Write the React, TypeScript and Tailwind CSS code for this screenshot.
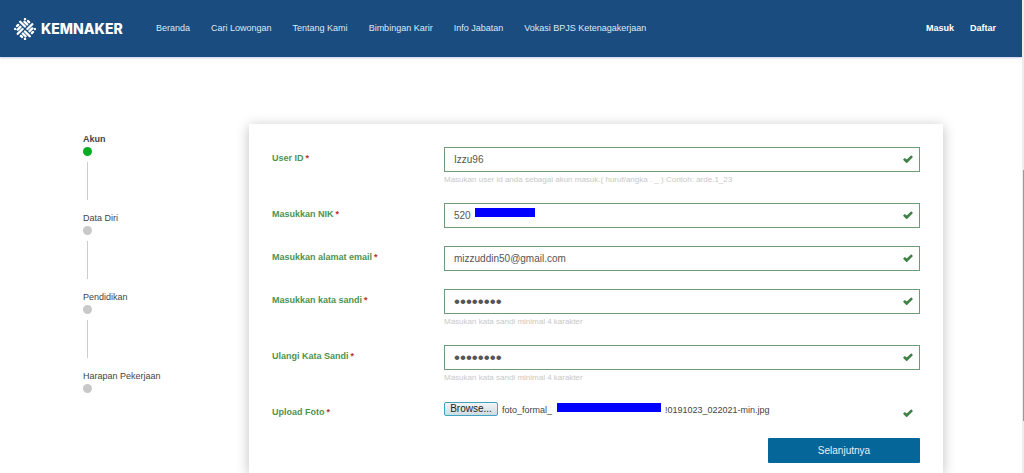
import { useRef, useState } from "react";
import clsx from "clsx";

const navLinks = [
  "Beranda",
  "Cari Lowongan",
  "Tentang Kami",
  "Bimbingan Karir",
  "Info Jabatan",
  "Vokasi BPJS Ketenagakerjaan",
];

const steps = ["Akun", "Data Diri", "Pendidikan", "Harapan Pekerjaan"];

type Field = {
  id: string;
  label: string;
  type: string;
  value: string;
  hint?: string;
  masked?: boolean;
};

const fields: Field[] = [
  {
    id: "userId",
    label: "User ID",
    type: "text",
    value: "Izzu96",
    hint: "Masukan user id anda sebagai akun masuk.( huruf/angka . _ ) Contoh: arde.1_23",
  },
  { id: "nik", label: "Masukkan NIK", type: "text", value: "520", masked: true },
  {
    id: "email",
    label: "Masukkan alamat email",
    type: "email",
    value: "mizzuddin50@gmail.com",
  },
  {
    id: "password",
    label: "Masukkan kata sandi",
    type: "password",
    value: "rahasia1",
    hint: "Masukan kata sandi minimal 4 karakter",
  },
  {
    id: "confirm",
    label: "Ulangi Kata Sandi",
    type: "password",
    value: "rahasia1",
    hint: "Masukan kata sandi minimal 4 karakter",
  },
];

const Logo = () => (
  <svg viewBox="0 0 44 44" className="h-[22px] w-[22px]" aria-hidden="true">
    <g
      transform="rotate(45 22 22)"
      stroke="white"
      strokeWidth="4.8"
      strokeLinecap="round"
    >
      {/* one woven arm, repeated in each quarter */}
      <path d="M5 18.5H18.5M11 12.5H18.5M15 6.5H18M8 8H8.1" />
      <path d="M5 18.5H18.5M11 12.5H18.5M15 6.5H18M8 8H8.1" transform="rotate(90 22 22)" />
      <path d="M5 18.5H18.5M11 12.5H18.5M15 6.5H18M8 8H8.1" transform="rotate(180 22 22)" />
      <path d="M5 18.5H18.5M11 12.5H18.5M15 6.5H18M8 8H8.1" transform="rotate(270 22 22)" />
    </g>
  </svg>
);

const CheckMark = () => (
  <svg
    viewBox="0 0 20 16"
    className="absolute top-2 right-[7px] h-[8px] w-[10px]"
    aria-hidden="true"
  >
    <path d="M0 9.5L3.5 5.8L7.6 9L16.4 0.6L20 4L8 16H6.6Z" fill="#3f8045" />
  </svg>
);

const Header = () => (
  <header className="flex h-[57px] items-center bg-[#1a4c80] pr-[26px] pl-[14px] text-[9px] text-[#dce9f5] shadow-[0_1px_2px_#c3cbe6]">
    <a href="#" className="flex w-[142px] items-center gap-[5px] text-white">
      <Logo />
      <span className="font-[Inter,sans-serif] text-[14px] leading-[18px] font-extrabold">
        KEMNAKER
      </span>
    </a>
    <nav className="flex flex-1 gap-[21px]">
      {navLinks.map((link) => (
        <a key={link} href="#">
          {link}
        </a>
      ))}
    </nav>
    <div className="flex gap-4 font-bold text-white">
      <a href="#">Masuk</a>
      <a href="#">Daftar</a>
    </div>
  </header>
);

const Steps = () => (
  <ol className="w-[166px] shrink-0 pt-2 text-[9px] text-[#444]">
    {steps.map((step, indx) => (
      <li key={step}>
        <p className={clsx("leading-[14px]", indx === 0 && "font-bold")}>{step}</p>
        <div
          className={clsx(
            "mt-px h-[9px] w-[9px] rounded-full",
            indx === 0 ? "bg-[#06ad23]" : "bg-[#c8c8c8]"
          )}
        />
        {indx < steps.length - 1 && (
          <div className="mt-[6px] mb-[11px] ml-1 h-[38px] w-px bg-[#ccc]" />
        )}
      </li>
    ))}
  </ol>
);

const Label = ({ id, text }: { id: string; text: string }) => (
  <label
    htmlFor={id}
    className="w-[172px] shrink-0 text-[9px] leading-[22px] font-bold text-[#4f934f]"
  >
    {text}
    <span className="ml-[2px] text-[#b8322f]">*</span>
  </label>
);

const RegisterForm = () => {
  const [values, setValues] = useState<Record<string, string>>(
    Object.fromEntries(fields.map((f) => [f.id, f.value]))
  );
  const fileRef = useRef<HTMLInputElement>(null);

  return (
    <form
      onSubmit={(e) => e.preventDefault()}
      className="flex-1 bg-white px-[23px] pt-[23px] shadow-[0_2px_12px_rgba(0,0,0,0.25)]"
    >
      {fields.map((field) => (
        <div key={field.id} className="mb-[18px] flex">
          <Label id={field.id} text={field.label} />
          <div className="flex-1">
            <div className="relative">
              <input
                id={field.id}
                type={field.type}
                value={values[field.id]}
                onChange={(e) =>
                  setValues({ ...values, [field.id]: e.target.value })
                }
                className={clsx(
                  "block h-[25px] w-full border border-[#6f9a75] bg-white pr-6 pl-[9px] text-[#555] outline-none",
                  field.type === "password" ? "text-[17px]" : "text-[10px]"
                )}
              />
              {field.masked && (
                <span className="absolute top-[5px] left-[31px] h-[9px] w-[60px] bg-[#0000fe]" />
              )}
              <CheckMark />
            </div>
            {field.hint && (
              <p className="h-[13px] text-[8px] leading-[15px] text-[#c8c8c8]">
                {field.hint}
              </p>
            )}
          </div>
        </div>
      ))}
      <div className="mb-3 flex">
        <Label id="photo" text="Upload Foto" />
        <div className="relative flex h-[25px] flex-1 items-start text-[9px] text-[#444]">
          <input id="photo" ref={fileRef} type="file" className="sr-only" />
          <button
            type="button"
            onClick={() => fileRef.current?.click()}
            className="mt-px h-[14px] w-[54px] rounded-[2px] border border-[#3fa3c4] bg-linear-to-b from-[#f2f4f5] to-[#cfdbe2] text-[10px] leading-[12px] text-[#222]"
          >
            Browse...
          </button>
          <span className="ml-1 leading-[18px]">foto_formal_</span>
          <span className="mt-[2px] mr-1 ml-[5px] h-[9px] w-[104px] bg-[#0000fe]" />
          <span className="leading-[18px]">!0191023_022021-min.jpg</span>
          <CheckMark />
        </div>
      </div>
      <div className="flex justify-end">
        <button
          type="submit"
          className="h-[25px] w-[152px] rounded-[1px] bg-[#046699] text-[10px] text-[#e4f1f8]"
        >
          Selanjutnya
        </button>
      </div>
    </form>
  );
};

const App = () => (
  <div className="flex min-h-screen bg-white font-['Liberation_Sans',Arial,sans-serif]">
    <div className="flex flex-1 flex-col overflow-hidden">
      <Header />
      <main className="flex flex-1 pt-[67px] pr-[79px] pl-[83px]">
        <Steps />
        <RegisterForm />
      </main>
    </div>
    <div className="flex w-[2px] flex-col items-end bg-[#ececec]">
      <div className="h-[36%]" />
      <div className="h-[53%] w-px bg-[#9a9a9a]" />
    </div>
  </div>
);

export default App;
